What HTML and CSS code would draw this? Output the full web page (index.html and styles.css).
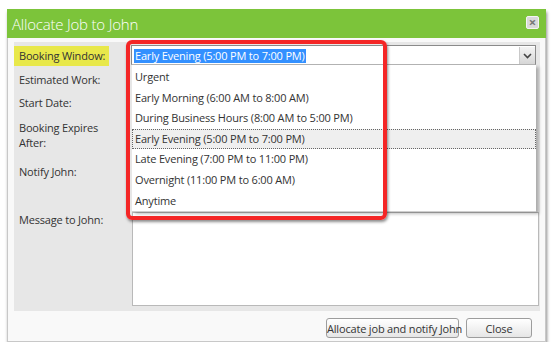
FILE: index.html
```html
<!DOCTYPE html>
<html>
<head>
    <title>Allocate Job to John</title>
    <link rel="stylesheet" href="styles.css">
</head>
<body>
    <div class="dialog">
        <div class="dialog-header">
            <span class="dialog-title">Allocate Job to John</span>
            <span class="close-x">&#215;</span>
        </div>
        <div class="dialog-body">
            <div class="form">
                <div class="row row-booking">
                    <div class="label"><span class="highlight">Booking Window:</span></div>
                    <div class="field">
                        <div class="select">
                            <span class="select-value"><span class="selected-text">Early Evening (5:00 PM to 7:00 PM)</span></span>
                            <span class="select-arrow">
                                <svg width="9" height="6" viewBox="0 0 9 6"><path d="M1 1 L4.5 4.5 L8 1" fill="none" stroke="#444" stroke-width="1.6"/></svg>
                            </span>
                        </div>
                        <ul class="options">
                            <li>Urgent</li>
                            <li>Early Morning (6:00 AM to 8:00 AM)</li>
                            <li>During Business Hours (8:00 AM to 5:00 PM)</li>
                            <li class="current">Early Evening (5:00 PM to 7:00 PM)</li>
                            <li>Late Evening (7:00 PM to 11:00 PM)</li>
                            <li>Overnight (11:00 PM to 6:00 AM)</li>
                            <li>Anytime</li>
                        </ul>
                        <div class="annotation"></div>
                    </div>
                </div>
                <div class="row row-work">
                    <div class="label">Estimated Work:</div>
                    <div class="field"></div>
                </div>
                <div class="row row-start">
                    <div class="label">Start Date:</div>
                    <div class="field"></div>
                </div>
                <div class="row row-expires">
                    <div class="label">Booking Expires<br>After:</div>
                    <div class="field"></div>
                </div>
                <div class="row row-notify">
                    <div class="label">Notify John:</div>
                    <div class="field"></div>
                </div>
                <div class="row row-message">
                    <div class="label">Message to John:</div>
                    <div class="field"><div class="textarea"></div></div>
                </div>
            </div>
        </div>
        <div class="dialog-footer">
            <button class="btn btn-allocate">Allocate job and notify John</button>
            <button class="btn btn-close">Close</button>
        </div>
    </div>
</body>
</html>
```
FILE: styles.css
```css
body {
    margin: 0;
    background-color: #ffffff;
    font-family: 'Open Sans', 'Liberation Sans', sans-serif;
    font-size: 11px;
    letter-spacing: -0.18px;
    color: #333;
}

.dialog {
    margin: 9px 0 0 7px;
    width: 537px;
    height: 332px;
    border: 1px solid #c8c8c8;
    border-top: none;
    background-color: #f9f9f9;
    box-shadow: 1px 3px 3px rgba(0, 0, 0, 0.45);
    display: flex;
    flex-direction: column;
}

.dialog-header {
    height: 29px;
    margin: 0 -1px;
    background-color: #7cc43a;
    display: flex;
    align-items: center;
    justify-content: space-between;
    padding: 0 7px 0 5px;
}

.dialog-title {
    color: #ffffff;
    font-size: 15px;
    font-weight: 300;
    letter-spacing: -0.2px;
}

.close-x {
    width: 11px;
    height: 11px;
    border: 1px solid #f4f4f4;
    border-radius: 2px;
    background-color: #d9d9d9;
    color: #777;
    font-size: 13px;
    font-weight: bold;
    line-height: 10px;
    text-align: center;
    margin-top: -3px;
}

.dialog-body {
    padding: 4px 5px 0 6px;
}

.form {
    background-color: #e7e7e7;
    height: 269px;
}

.row {
    display: grid;
    grid-template-columns: 117px 1fr;
}

.label {
    padding-left: 5px;
    line-height: 15px;
}

.row-booking { height: 26px; }
.row-booking .label { padding: 4px 0 0 0; }
.highlight {
    display: inline-block;
    background-color: #e8e84a;
    padding: 3px 4px 3px 5px;
    line-height: 14px;
}

.row-work { height: 23px; }
.row-work .label { padding-top: 4px; }
.row-start { height: 23px; }
.row-start .label { padding-top: 4px; }
.row-expires { height: 42px; }
.row-expires .label { padding-top: 6px; }
.row-notify { height: 50px; }
.row-notify .label { padding-top: 8px; }
.row-message .label { padding-top: 6px; }

.field {
    position: relative;
    padding-right: 1px;
}

.select {
    margin-top: 3px;
    width: 403px;
    height: 18px;
    border: 1px solid #8a8a8a;
    border-bottom-color: #b5b5b5;
    background-color: #ffffff;
    display: flex;
    justify-content: space-between;
}

.select-value {
    padding: 2px 0 0 2px;
}

.selected-text {
    display: inline-block;
    background-color: #3390ff;
    color: #ffffff;
    line-height: 14px;
    padding: 0 1px;
}

.select-arrow {
    width: 15px;
    height: 17px;
    margin-top: 1px;
    border-left: 1px solid #c9c9c9;
    background: linear-gradient(#f4f4f4, #d6d6d6);
    display: flex;
    align-items: center;
    justify-content: center;
}

/* dropdown list opened over the other fields */
.options {
    position: absolute;
    top: 23px;
    left: 1px;
    width: 404px;
    margin: 0;
    padding: 2px 0 0 0;
    list-style: none;
    background-color: #ffffff;
    border-bottom: 1px solid #cfcfcf;
    box-shadow: 3px 2px 3px rgba(0, 0, 0, 0.25);
    z-index: 2;
}

.options li {
    height: 20.6px;
    line-height: 20.6px;
    padding-left: 3px;
    box-sizing: border-box;
}

.options li.current {
    background-color: #efefef;
    border: 1px dotted #666;
    line-height: 18.6px;
    padding-left: 2px;
}

.annotation {
    position: absolute;
    top: -2px;
    left: -5px;
    width: 253px;
    height: 172px;
    border: 4px solid #f42626;
    border-radius: 6px;
    box-shadow: 1px 2px 3px rgba(0, 0, 0, 0.45);
    z-index: 3;
}

.textarea {
    margin: 6px 0 0 1px;
    height: 92px;
    border: 1px solid #b9b9b9;
    background-color: #ffffff;
}

.dialog-footer {
    flex: 1;
    display: flex;
    justify-content: flex-end;
    align-items: flex-start;
    gap: 7px;
    padding: 7px 13px 0 0;
}

.btn {
    font-family: 'Open Sans', 'Liberation Sans', sans-serif;
    font-size: 11px;
    letter-spacing: -0.18px;
    color: #333;
    height: 20px;
    padding: 0;
    white-space: nowrap;
    border: 1px solid #9d9d9d;
    border-radius: 3px;
    background: linear-gradient(#ffffff, #e6e6e6);
}

.btn-allocate {
    width: 133px;
}

.btn-close {
    width: 66px;
}
```
